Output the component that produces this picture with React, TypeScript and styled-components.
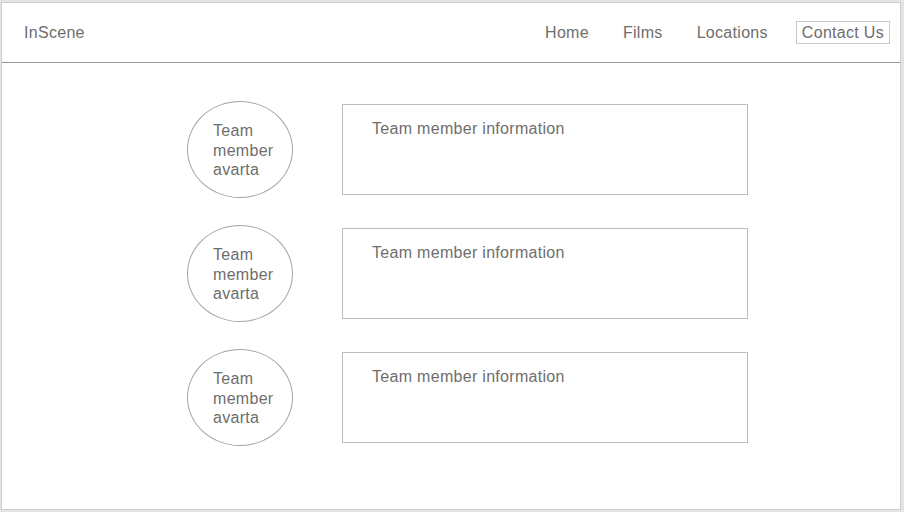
import React from "react";
import styled, { createGlobalStyle } from "styled-components";

const Global = createGlobalStyle`
  html, body {
    margin: 0;
    padding: 0;
    background: #e4e4e4;
    font-family: "Liberation Sans", Arial, Helvetica, sans-serif;
  }
  * { box-sizing: border-box; }
`;

const Frame = styled.div`
  margin: 2px 0 0 1px;
  width: 900px;
  height: 508px;
  background: #ffffff;
  border: 1px solid #cdcdcd;
  display: flex;
  flex-direction: column;
`;

const Header = styled.header`
  height: 60px;
  border-bottom: 1px solid #959595;
  display: flex;
  align-items: center;
  justify-content: space-between;
  padding: 0 10px 0 22px;
`;

const Brand = styled.div`
  font-size: 16px;
  letter-spacing: 0.3px;
  color: #6e6e6e;
`;

const Nav = styled.nav`
  display: flex;
  align-items: center;
  gap: 22px;
`;

const NavItem = styled.a<{ $active?: boolean }>`
  font-size: 16px;
  line-height: 19px;
  letter-spacing: 0.3px;
  color: #6e6e6e;
  text-decoration: none;
  padding: 1px 5px;
  border: 1px solid ${(p) => (p.$active ? "#c9c9c9" : "transparent")};
`;

const Main = styled.main`
  padding: 38px 0 0 185px;
  display: flex;
  flex-direction: column;
  gap: 27px;
`;

const Row = styled.div`
  display: flex;
  align-items: center;
  gap: 49px;
`;

const Avatar = styled.div`
  width: 106px;
  height: 97px;
  border-radius: 50%;
  border: 1px solid #a3a3a3;
  display: flex;
  align-items: center;
  padding: 2px 0 0 25px;
  font-size: 16px;
  line-height: 19.5px;
  letter-spacing: 0.3px;
  color: #6e6e6e;
`;

const Info = styled.div`
  width: 406px;
  height: 91px;
  border: 1px solid #bdbdbd;
  padding: 14px 0 0 29px;
  font-size: 16px;
  line-height: 19px;
  letter-spacing: 0.3px;
  color: #6e6e6e;
`;

const members = [1, 2, 3];

export default function App() {
  return (
    <>
      <Global />
      <Frame>
        <Header>
          <Brand>InScene</Brand>
          <Nav>
            <NavItem>Home</NavItem>
            <NavItem>Films</NavItem>
            <NavItem>Locations</NavItem>
            <NavItem $active>Contact Us</NavItem>
          </Nav>
        </Header>
        <Main>
          {members.map((m) => (
            <Row key={m}>
              <Avatar>
                Team
                <br />
                member
                <br />
                avarta
              </Avatar>
              <Info>Team member information</Info>
            </Row>
          ))}
        </Main>
      </Frame>
    </>
  );
}
